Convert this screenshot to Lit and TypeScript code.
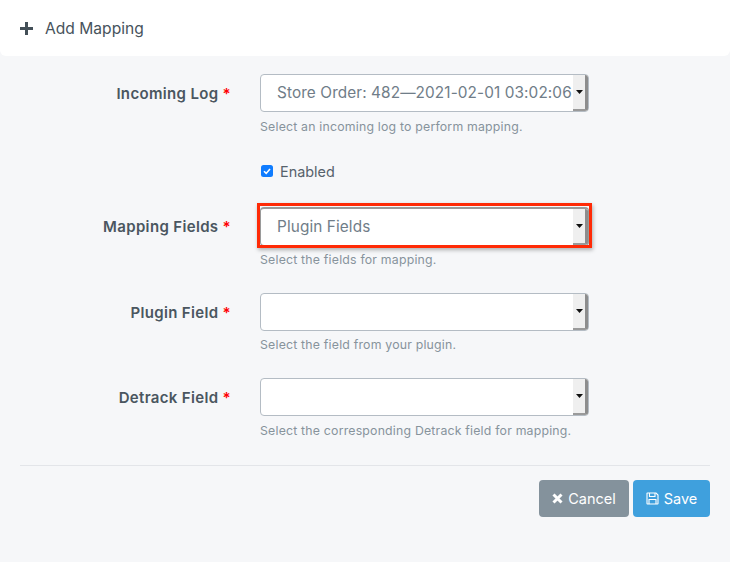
import { LitElement, html, css, svg } from "lit";
import { customElement } from "lit/decorators.js";

const caret = svg`<svg class="caret" width="7" height="4" viewBox="0 0 7 4"><path d="M0 0h7L3.5 4z" fill="#111"/></svg>`;

@customElement("app-root")
export class AppRoot extends LitElement {
  static styles = css`
    :host { display: block; width: 730px; height: 562px; background: #f6f7f9; font-family: Inter, "Liberation Sans", sans-serif; color: #4a5660; overflow: hidden; }
    * { box-sizing: border-box; }
    .head { height: 56px; background: #fff; border-radius: 0 0 6px 6px; display: flex; align-items: center; gap: 12px; padding: 0 20px; font-size: 15.6px; color: #47535c; }
    .head svg { display: block; }
    .body { padding: 18px 20px 0; display: flex; flex-direction: column; }
    .row { display: grid; grid-template-columns: 211px 330px; column-gap: 29px; align-items: start; }
    .label { text-align: right; font-size: 15px; letter-spacing: 0.34px; font-weight: 600; color: #4a5660; line-height: 39px; }
    .star { color: #f00; }
    .wrap { position: relative; width: 329px; }
    .select { height: 38px; background: #fff; border: 1px solid #b4bcc4; border-radius: 4px; display: flex; align-items: stretch; overflow: hidden; font-size: 15.35px; letter-spacing: 0.1px; color: #707d88; }
    .value { flex: 1; padding-left: 16px; line-height: 36px; white-space: nowrap; }
    .btn-arrow { width: 15px; background: #efefef; border-right: 3px solid #8d8d8d; border-bottom: 2px solid #9a9a9a; display: flex; align-items: center; justify-content: center; flex: none; }
    .select.hl { height: 39px; border-color: #9a9a9a; border-top-width: 2px; }
    .hl-box { position: absolute; inset: -4px -3px -2px -3px; border: 3px solid #ff2a06; box-shadow: 1px 2px 4px rgba(0, 0, 0, 0.3); pointer-events: none; }
    .hint { font-size: 12.3px; color: #87939c; line-height: 16px; margin-top: 6px; letter-spacing: 0.2px; }
    .hint.tall { margin-top: 7px; }
    .gap-check { margin-top: 26px; }
    .check { grid-column: 2; display: flex; align-items: center; gap: 7px; padding-left: 1px; font-size: 14.4px; color: #56626c; height: 20px; }
    .box { width: 12px; height: 12px; border-radius: 2.5px; background: #0f7cff; display: flex; align-items: center; justify-content: center; }
    .gap-a { height: 26px; }
    .gap-b { height: 25px; }
    hr { border: 0; border-top: 1px solid #e3e5e9; margin: 26px 0 14px; width: 690px; }
    .actions { display: flex; justify-content: flex-end; gap: 4px; }
    .btn { height: 37px; border-radius: 4px; color: #fff; display: flex; align-items: center; justify-content: center; gap: 5px; font-size: 14.5px; }
    .cancel { width: 90px; background: #84929c; }
    .save { width: 77px; background: #3fa0dd; }
  `;

  private field(label: string, value: string, hint: string, hl = false, tall = false) {
    return html`<div class="row">
      <div class="label">${label} <span class="star">*</span></div>
      <div>
        <div class="wrap">
          <div class="select ${hl ? "hl" : ""}">
            <div class="value">${value}</div>
            <div class="btn-arrow">${caret}</div>
          </div>
          ${hl ? html`<div class="hl-box"></div>` : ""}
        </div>
        <div class="hint ${tall ? "tall" : ""}">${hint}</div>
      </div>
    </div>`;
  }

  render() {
    return html`
      <div class="head">
        <svg width="13" height="13" viewBox="0 0 13 13"><path d="M5 0h3v5h5v3H8v5H5V8H0V5h5z" fill="#434f57"/></svg>
        <span>Add Mapping</span>
      </div>
      <div class="body">
        ${this.field("Incoming Log", "Store Order: 482—2021-02-01 03:02:06", "Select an incoming log to perform mapping.", false, true)}
        <div class="row gap-check">
          <div class="check">
            <span class="box"><svg width="10" height="10" viewBox="0 0 10 10"><path d="M2 5.200l2.200 2.200L8 3" fill="none" stroke="#fff" stroke-width="1.6"/></svg></span>
            Enabled
          </div>
        </div>
        <div class="gap-a"></div>
        ${this.field("Mapping Fields", "Plugin Fields", "Select the fields for mapping.", true)}
        <div class="gap-b"></div>
        ${this.field("Plugin Field", "", "Select the field from your plugin.")}
        <div class="gap-b"></div>
        ${this.field("Detrack Field", "", "Select the corresponding Detrack field for mapping.", false, true)}
        <hr />
        <div class="actions">
          <div class="btn cancel">
            <svg width="11" height="11" viewBox="0 0 11 11"><path d="M1.500 1.500l8 8M9.500 1.500l-8 8" stroke="#fff" stroke-width="3" fill="none"/></svg>
            Cancel
          </div>
          <div class="btn save">
            <svg width="13" height="13" viewBox="0 0 13 13" fill="none" stroke="#fff" stroke-width="1.1"><path d="M1.500 1h8.500l2 2v8.500a.5.500 0 0 1-.5.500h-10a.5.500 0 0 1-.5-.500v-10a.5.500 0 0 1 .5-.500z"/><path d="M3.500 1v3.500h5.500V1M3 12V7.500h7V12"/></svg>
            Save
          </div>
        </div>
      </div>
    `;
  }
}
